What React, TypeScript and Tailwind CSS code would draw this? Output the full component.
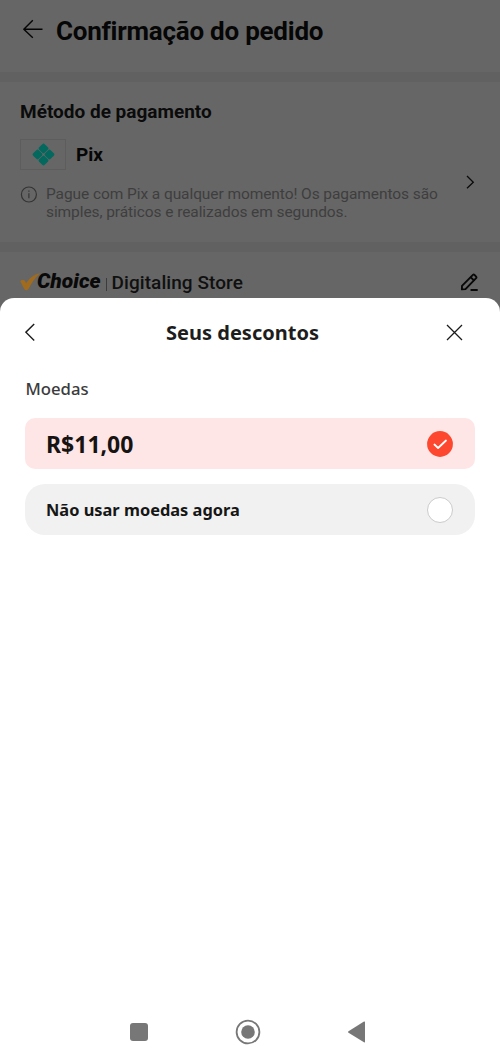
import type { ReactNode } from 'react';

function CheckoutHeader() {
  return (
    <header className="flex h-[72px] items-start pl-[22px]">
      <svg className="mt-[19px] h-5 w-[22px] shrink-0" viewBox="0 0 22 20" fill="none" stroke="#050505" strokeWidth="1.4">
        <path d="M20.5 10.3H1.8M10.8 1.3L1.8 10.3L10.8 18.8" strokeLinejoin="round" />
      </svg>
      <h1 className="ml-3 mt-[13px] text-[26px] font-bold leading-9 tracking-[-0.24px] text-[#060606]">Confirmação do pedido</h1>
    </header>
  );
}

function PixLogo() {
  return (
    <svg className="h-[23px] w-[23px]" viewBox="0 0 24 24" fill="#03695f">
      <g transform="rotate(45 12 12)">
        <rect x="3.5" y="3.5" width="8.2" height="8.2" rx="1.8" />
        <rect x="12.3" y="3.5" width="8.2" height="8.2" rx="1.8" />
        <rect x="3.5" y="12.3" width="8.2" height="8.2" rx="1.8" />
        <rect x="12.3" y="12.3" width="8.2" height="8.2" rx="1.8" />
      </g>
    </svg>
  );
}

function PaymentMethod() {
  return (
    <section className="flex h-[170px] justify-between border-t-[10px] border-[#616161] pl-5 pr-[25px]">
      <div className="whitespace-nowrap">
        <h2 className="mt-[18px] text-[19px] font-bold leading-6 text-[#0b0b0b]">Método de pagamento</h2>
        <div className="mt-[15px] flex h-[31px] items-center">
          <div className="flex h-[31px] w-[46px] items-center justify-center border border-[#5d5d5d]">
            <PixLogo />
          </div>
          <span className="ml-2.5 mt-0.5 text-[19px] font-bold text-[#060606]">Pix</span>
        </div>
        <div className="mt-[15px] flex">
          <svg className="mt-px h-[17px] w-[17px]" viewBox="0 0 17 17" fill="none" stroke="#343434" strokeWidth="1.2">
            <circle cx="8.9" cy="8.5" r="7.5" />
            <path d="M8.9 7.2V12.3M8.9 4.5V5.8" />
          </svg>
          <p className="ml-[9px] text-[15.5px] leading-[18px] tracking-[-0.08px] text-[#3e3e3e]">
            Pague com Pix a qualquer momento! Os pagamentos são
            <br />
            simples, práticos e realizados em segundos.
          </p>
        </div>
      </div>
      <svg className="mt-[93px] h-[14px] w-[9px]" viewBox="0 0 9 14" fill="none" stroke="#0b0b0b" strokeWidth="1.3">
        <path d="M1 1L7.3 7.2L1 13.3" />
      </svg>
    </section>
  );
}

function StoreRow() {
  return (
    <section className="flex h-[56px] items-start justify-between border-t-[10px] border-[#616161] pl-5 pr-[21px]">
      <div className="mt-4 flex h-7 items-center whitespace-nowrap">
        <svg className="h-[18px] w-5" viewBox="0 0 20 18" fill="#a06b1c">
          <path d="M0.3 8.2Q2.3 6 4.3 7.2L6.3 10.2C9 5.6 13.5 1.3 20 0.2C15.2 4.5 11.5 10 8.3 16.2Q6.2 18.3 4.3 16Z" />
        </svg>
        <span className="-ml-[3px] -mt-px text-[21px] font-black italic text-[#090909]">Choice</span>
        <span className="ml-[5px] mt-1 h-[13px] w-px bg-[#3c3c3c]" />
        <span className="ml-[5px] mt-[3px] text-[19px] font-medium tracking-[0.06px] text-[#101010]">Digitaling Store</span>
      </div>
      <svg className="mt-[21px] h-[19px] w-[19px]" viewBox="0 0 19 19" fill="none" stroke="#080808" strokeWidth="1.9" strokeLinejoin="round" strokeLinecap="round">
        <path d="M2 12.8L12.9 1.9Q13.7 1.2 14.5 1.9L16.1 3.6Q16.8 4.4 16.1 5.2L5.5 16.1L1.9 16.4Z" />
        <path d="M10.8 4.4L13.8 7.2M11.3 17H17" />
      </svg>
    </section>
  );
}

function DiscountOption({ label, selected, children }: { label: string; selected: boolean; children: ReactNode }) {
  return (
    <button
      type="button"
      role="radio"
      aria-checked={selected}
      aria-label={label}
      className={
        selected
          ? 'flex h-[51px] w-full items-center justify-between rounded-[10px] bg-[#ffe6e6] pl-[21px] pr-[22px]'
          : 'flex h-[51px] w-full items-center justify-between rounded-[20px] bg-[#f1f1f1] pl-[21px] pr-[22px]'
      }
    >
      {children}
      {selected ? (
        <svg className="h-[26px] w-[26px]" viewBox="0 0 26 26">
          <circle cx="13" cy="13" r="12.9" fill="#fd472e" />
          <path d="M7.4 13.5L11.1 17L19 9.5" fill="none" stroke="#fff" strokeWidth="1.8" strokeLinecap="round" strokeLinejoin="round" />
        </svg>
      ) : (
        <span className="h-[26px] w-[26px] rounded-full border border-[#cbcbcb] bg-white" />
      )}
    </button>
  );
}

function DiscountSheet() {
  return (
    <main className="flex-1 rounded-t-[14px] bg-white px-[25px] font-['Noto_Sans',sans-serif]">
      <div className="flex h-[68px] items-center justify-between pr-3">
        <svg className="h-5 w-[18px]" viewBox="0 0 18 20" fill="none" stroke="#1b1b1b" strokeWidth="1.4">
          <path d="M9.2 2L0.9 10.2L9.2 18.5" />
        </svg>
        <h2 className="mr-[4px] mt-px text-xl font-bold text-[#1d1d1d]">Seus descontos</h2>
        <svg className="h-[17px] w-[17px]" viewBox="0 0 17 17" fill="none" stroke="#1b1b1b" strokeWidth="1.3">
          <path d="M1 1L16 16M16 1L1 16" />
        </svg>
      </div>
      <h3 className="ml-[0.5px] mt-[11px] text-[16.7px] font-medium leading-6 text-[#3b3b3b]">Moedas</h3>
      <div role="radiogroup" aria-label="Moedas" className="mt-[17px] flex flex-col gap-[15px]">
        <DiscountOption label="R$11,00" selected>
          <span className="mt-0.5 text-[23px] font-bold text-[#181313]">R$11,00</span>
        </DiscountOption>
        <DiscountOption label="Não usar moedas agora" selected={false}>
          <span className="mt-0.5 text-[16.4px] font-bold text-[#161616]">Não usar moedas agora</span>
        </DiscountOption>
      </div>
    </main>
  );
}

function NavigationBar() {
  return (
    <nav className="flex h-16 items-center bg-white pl-[130px]">
      <span className="h-[18px] w-[18px] rounded-[3px] bg-[#777]" />
      <svg className="ml-[87px] h-[26px] w-[26px]" viewBox="0 0 26 26">
        <circle cx="13" cy="13" r="11.4" fill="none" stroke="#777" strokeWidth="1.8" />
        <circle cx="13" cy="13" r="6.8" fill="#777" />
      </svg>
      <svg className="ml-[86px] h-[22px] w-[19px]" viewBox="0 0 19 22" fill="#777">
        <path d="M1.5 10.2L17 0.6Q18 0.2 18 1.2V20.8Q18 21.8 17 21.3L1.5 11.8Q0.4 11 1.5 10.2Z" />
      </svg>
    </nav>
  );
}

export default function App() {
  return (
    <div className="flex h-[1064px] w-[500px] flex-col overflow-hidden bg-[#666] font-[Roboto,sans-serif]">
      <CheckoutHeader />
      <PaymentMethod />
      <StoreRow />
      <DiscountSheet />
      <NavigationBar />
    </div>
  );
}
